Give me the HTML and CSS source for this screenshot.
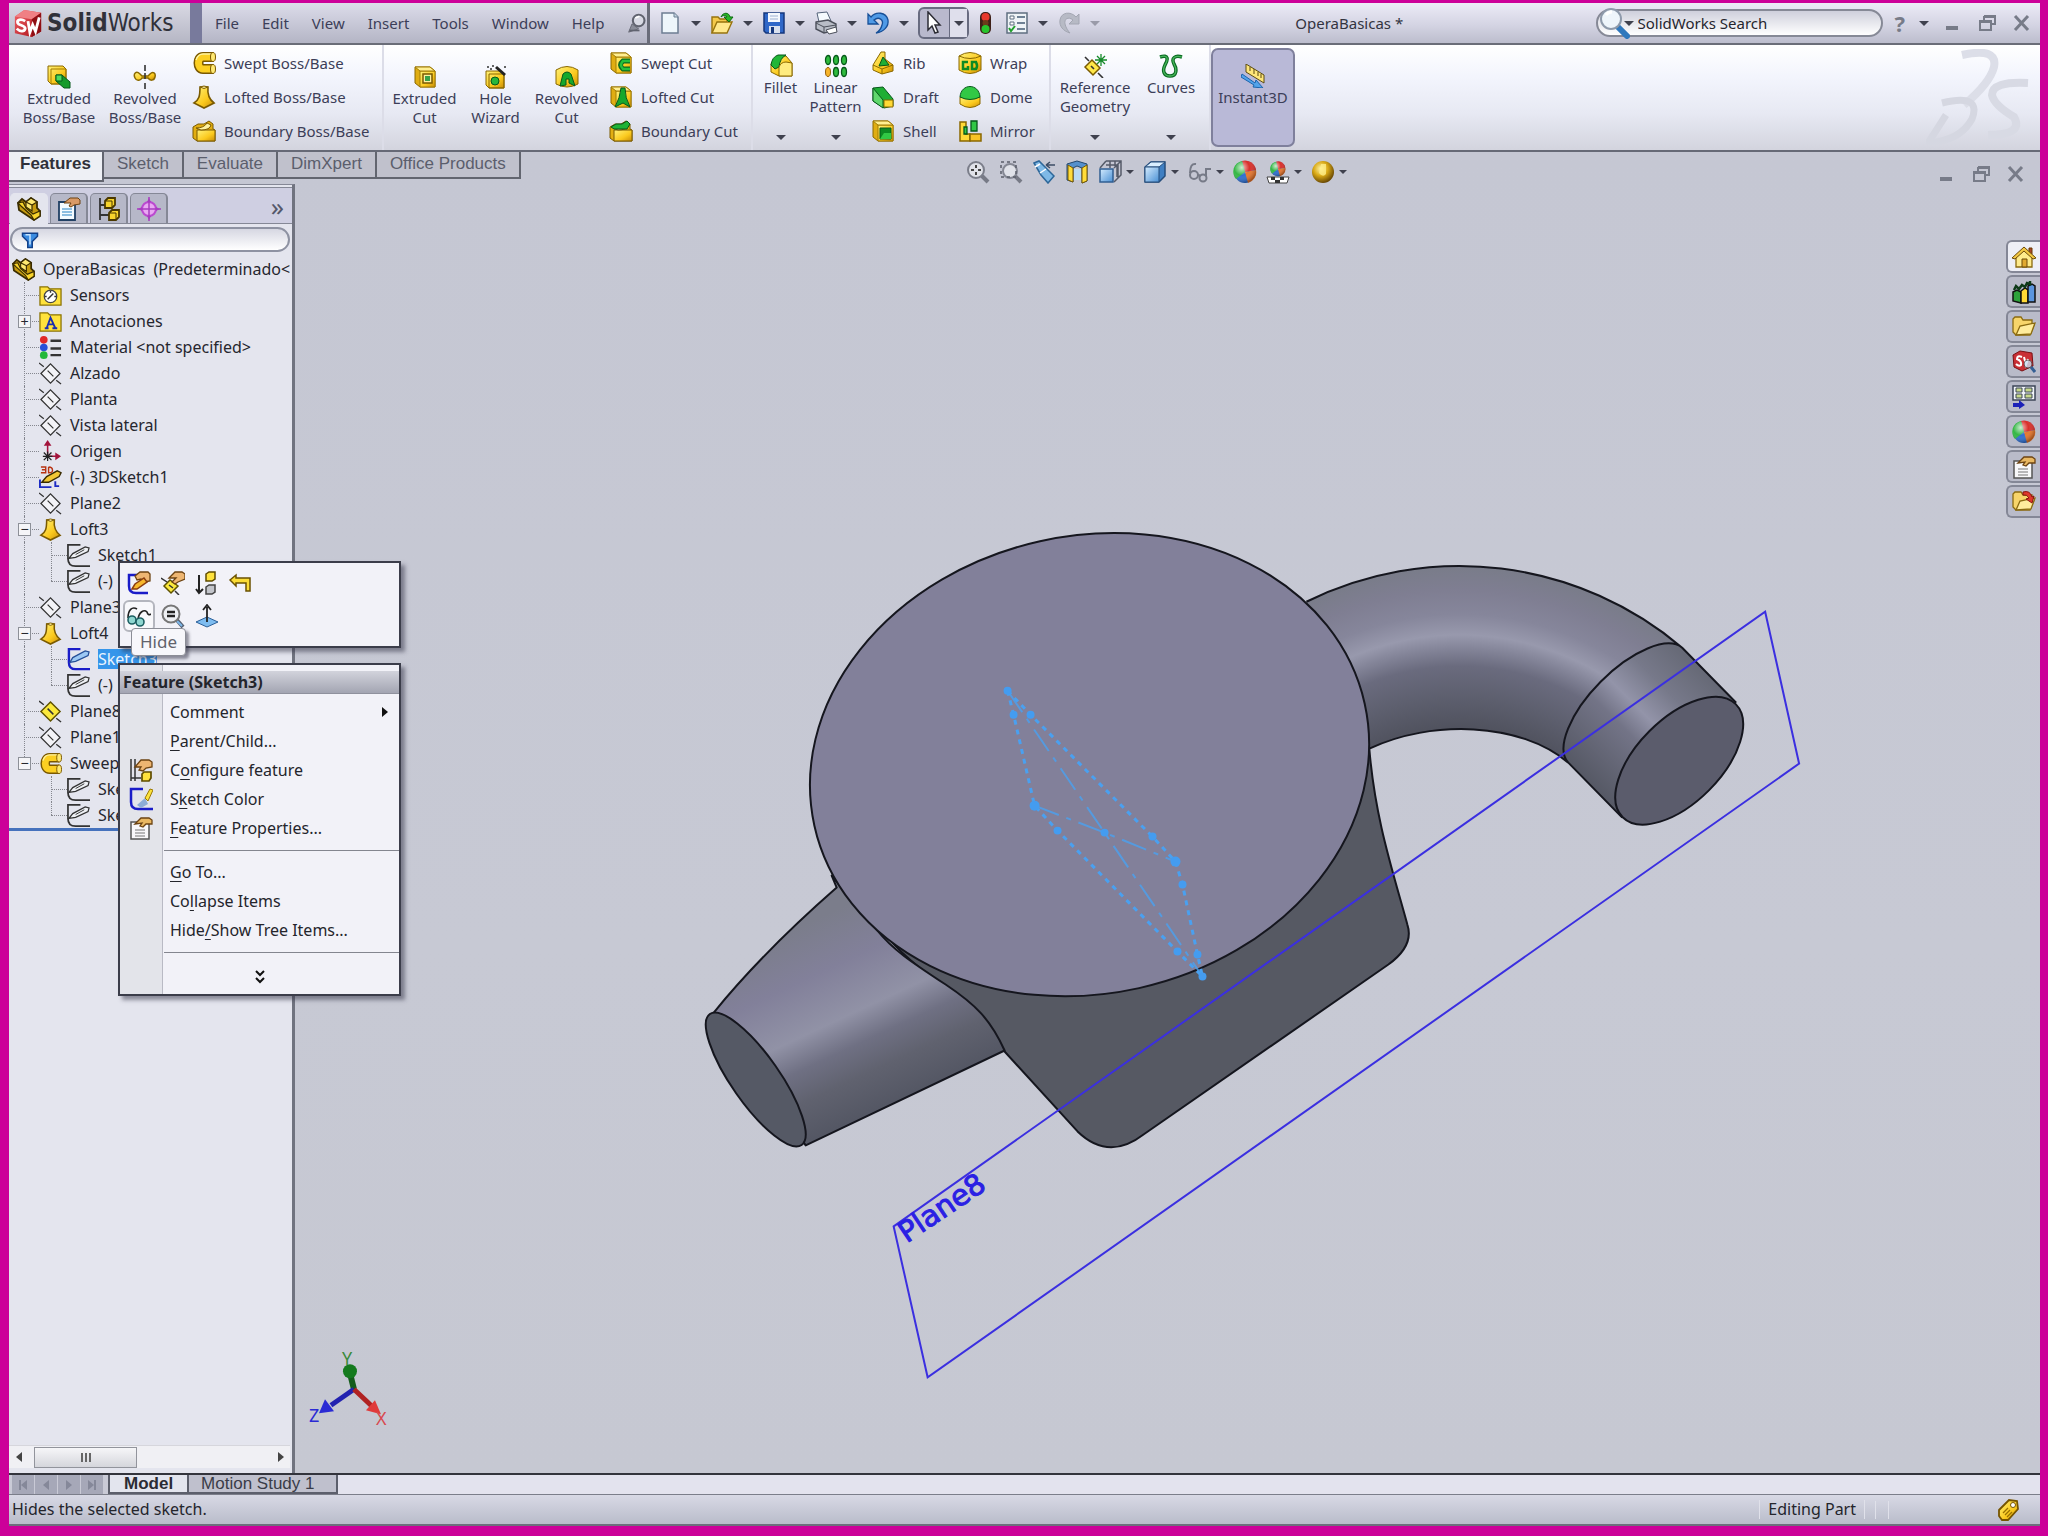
FILE: index.html
```html
<!DOCTYPE html>
<html lang="en">
<head>
<meta charset="utf-8">
<title>SolidWorks - OperaBasicas</title>
<link rel="stylesheet" href="styles.css">
</head>
<body>
<svg class="sprite" aria-hidden="true">
  <defs>
    <linearGradient id="gold" x1="0" y1="0" x2="1" y2="1"><stop offset="0" stop-color="#fff27a"/><stop offset="0.6" stop-color="#fbc91d"/><stop offset="1" stop-color="#c98d08"/></linearGradient>
    <linearGradient id="red" x1="0" y1="0" x2="1" y2="1"><stop offset="0" stop-color="#f4656a"/><stop offset="1" stop-color="#a50e14"/></linearGradient>
    <radialGradient id="shine" cx="0.35" cy="0.3" r="0.7"><stop offset="0" stop-color="#fff" stop-opacity="0.75"/><stop offset="0.5" stop-color="#fff" stop-opacity="0"/><stop offset="1" stop-color="#000" stop-opacity="0.3"/></radialGradient>
    <radialGradient id="goldball" cx="0.4" cy="0.35" r="0.65"><stop offset="0" stop-color="#fff6a8"/><stop offset="0.5" stop-color="#d9a916"/><stop offset="1" stop-color="#6b4a04"/></radialGradient>
    <linearGradient id="bluebox" x1="0" y1="0" x2="1" y2="1"><stop offset="0" stop-color="#d5ecff"/><stop offset="1" stop-color="#4a90d4"/></linearGradient>

    <symbol id="logo" viewBox="0 0 32 32"><path d="M2 9 12 2 30 5V25L20 31 2 27Z" fill="url(#red)"/><path d="M2 9 12 2 30 5 20 12Z" fill="#f08084"/><path d="M20 12 30 5V25L20 31Z" fill="#8f0f14"/><path d="M13 14C8 11 4 13 5 16 6 19 13 18 13 22 12 26 7 25 4 22M16 14 18 26 21 18 24 25 28 10" fill="none" stroke="#fff" stroke-width="3"/></symbol>
    <symbol id="pin" viewBox="0 0 24 24"><circle cx="14" cy="9" r="7" fill="#d8dae4" stroke="#60636f" stroke-width="2.500"/><path d="M10 6 15 4" stroke="#fff" stroke-width="2"/><path d="M6 13 14 19 2 23Z" fill="#8a8d99" stroke="#60636f"/><path d="M3 21H15" stroke="#60636f" stroke-width="2"/></symbol>
    <symbol id="new" viewBox="0 0 24 24"><path d="M4 2H16L20 6V22H4Z" fill="#eef6fb" stroke="#6d7e93" stroke-width="1.5"/><path d="M16 2V6H20" fill="#c4d4e0" stroke="#6d7e93"/></symbol>
    <symbol id="open" viewBox="0 0 24 24"><path d="M2 22V6H8L10 8H17V12" fill="#f4c94a" stroke="#97730e" stroke-width="1.4"/><path d="M2 22 7 11H22L17 22Z" fill="#ffe88b" stroke="#97730e" stroke-width="1.4"/><path d="M11 6C13 1 19 1 20 6H23L19 11 14 6H17C16 4 13 4 11 6Z" fill="#27b527" stroke="#0c6a10"/></symbol>
    <symbol id="save" viewBox="0 0 24 24"><path d="M2 2H22V22H4L2 20Z" fill="#2f67c8" stroke="#16377c" stroke-width="1.5"/><path d="M6 2H18V11H6Z" fill="#f4f7fd"/><path d="M8 5H16M8 8H16" stroke="#9db0d2"/><path d="M7 15H18V22H7Z" fill="#d9e0ee"/><path d="M9 16H12V22H9Z" fill="#16377c"/></symbol>
    <symbol id="print" viewBox="0 0 24 24"><path d="M5 11 3 2 13 1 17 10Z" fill="#f6fbff" stroke="#54637a"/><path d="M2 11 14 9 22 13V19L10 22 2 18Z" fill="#b8bcc6" stroke="#4b4f5a" stroke-width="1.4"/><path d="M2 12 10 16 22 14M10 16V21" stroke="#4b4f5a" fill="none"/><path d="M12 19 22 16 23 21 15 23Z" fill="#fff" stroke="#4b4f5a"/></symbol>
    <symbol id="undo" viewBox="0 0 24 24"><path d="M2 3V13H12L8 9C13 5 18 9 16 14 15 18 12 21 10 22 18 21 23 15 22 9 20 1 10 0 5 6Z" fill="#4f9ae6" stroke="#174f97" stroke-width="1.3"/></symbol>
    <symbol id="redo" viewBox="0 0 24 24"><path d="M22 3V13H12L16 9C11 5 7 8 8 13 9 17 11 20 13 22 6 20 2 15 3 9 4 1 14 0 19 6Z" fill="#b7bac5" stroke="#a3a6b2"/></symbol>
    <symbol id="cursor" viewBox="0 0 24 24"><path d="M7 1V19L11 15 14 22 17 21 14 14H19Z" fill="#fff" stroke="#2c2c34" stroke-width="1.5"/></symbol>
    <symbol id="light" viewBox="0 0 16 24"><rect x="3" y="1" width="11" height="22" rx="5" fill="#3d2018"/><circle cx="8.500" cy="6" r="4" fill="#e8392c"/><circle cx="8.500" cy="12" r="3" fill="#6b3b1a"/><circle cx="8.500" cy="18" r="4" fill="#27c42c"/></symbol>
    <symbol id="options" viewBox="0 0 24 24"><path d="M2 2H22V22H2Z" fill="#eef3f6" stroke="#5f6f80" stroke-width="1.5"/><path d="M5 5H9V8H5ZM5 11H9V14H5Z" fill="#fff" stroke="#5f6f80"/><path d="M12 6H20M12 12H20M12 18H20" stroke="#6e8194" stroke-width="2"/><path d="M4 17 6 20 10 15" stroke="#1fa02a" stroke-width="2" fill="none"/></symbol>
    <symbol id="search" viewBox="0 0 32 32"><path d="M19 19 29 29" stroke="#2f78bd" stroke-width="6" stroke-linecap="round"/><circle cx="13" cy="12" r="10" fill="#eef5fb" stroke="#8e9aab" stroke-width="2"/><path d="M8 8Q10 5 14 5" stroke="#fff" stroke-width="3" fill="none"/></symbol>
    <symbol id="minimize" viewBox="0 0 20 20"><path d="M3 13H15V17H3Z" fill="#777b88"/></symbol>
    <symbol id="restore" viewBox="0 0 20 20"><path d="M7 3H18V11H14M7 3V7M3 8H14V17H3ZM3 9H14M7 4H18" fill="none" stroke="#777b88" stroke-width="2"/></symbol>
    <symbol id="close" viewBox="0 0 20 20"><path d="M4 3 17 17M17 3 4 17" stroke="#777b88" stroke-width="3"/></symbol>

    <symbol id="cube" viewBox="0 0 24 24"><path d="M2 2H17L22 6V22H7L2 18Z" fill="#e0ad12" stroke="#8a6800"/><path d="M7 6H22V22H7Z" fill="url(#gold)" stroke="#a27c04"/><path d="M2 2H17L22 6H7Z" fill="#ffef92" stroke="#a27c04"/></symbol>
    <symbol id="extrude" viewBox="0 0 24 24"><path d="M1 1H16L19 4V19H4L1 16Z" fill="url(#gold)" stroke="#8a6800"/><path d="M4 4H19V19H4Z" fill="none" stroke="#a27c04"/><path d="M9 10H15L23 17V23H17L9 16Z" fill="#149a2a" stroke="#06581a"/><path d="M9 10H15V16H9Z" fill="#4fdc62" stroke="#06581a"/></symbol>
    <symbol id="revolve" viewBox="0 0 24 24"><path d="M7 9C3 5 0 9 2 13 4 17 8 15 9 13H15C17 16 21 16 22 12 23 8 20 6 17 9L15 11H9Z" fill="url(#gold)" stroke="#8a6800" stroke-width="1.500"/><path d="M12 0V6M12 8V14M12 18V24" stroke="#333" stroke-width="1.6"/></symbol>
    <symbol id="sweep" viewBox="0 0 24 24"><path d="M21 6H11C5 6 5 18 11 18H21" fill="none" stroke="#7a5800" stroke-width="10"/><path d="M21 6H11C5 6 5 18 11 18H21" fill="none" stroke="#fccf22" stroke-width="7"/><path d="M19 3H11C7 3 5 6 4 9" fill="none" stroke="#fff4a0" stroke-width="1.5"/><ellipse cx="21" cy="6" rx="2.500" ry="4.500" fill="#ffe972" stroke="#7a5800"/><ellipse cx="21" cy="18" rx="2.500" ry="4.500" fill="#ffe972" stroke="#7a5800"/></symbol>
    <symbol id="loft" viewBox="0 0 24 24"><path d="M8 2H16C15 11 18 15 22 18L12 23 2 18C7 15 8 11 8 2Z" fill="url(#gold)" stroke="#7a5a00" stroke-width="1.6"/><path d="M8 2Q12 5 16 2 12 0 8 2Z" fill="#fff2a0" stroke="#7a5a00"/></symbol>
    <symbol id="boundary" viewBox="0 0 24 24"><path d="M1 8 6 5H12L17 2 21 5V10L23 11V22H5L1 19Z" fill="#e2ae12" stroke="#7a5a00"/><path d="M5 11H23V22H5Z" fill="url(#gold)" stroke="#7a5a00"/><path d="M4 9Q12 9 15 4L19 6Q18 11 9 11Z" fill="#fff3a0" stroke="#7a5a00"/></symbol>
    <symbol id="cutextrude" viewBox="0 0 24 24"><use href="#cube"/><path d="M10 9H19V18H10Z" fill="#fff0a0" stroke="#7a5a00" stroke-width="1.5"/><path d="M12 11H17V16H12Z" fill="#39a24a"/></symbol>
    <symbol id="hole" viewBox="0 0 24 24"><path d="M2 6H17L20 9V23H5L2 20Z" fill="url(#gold)" stroke="#8a6800"/><path d="M5 9H20V23H5Z" fill="none" stroke="#8a6800"/><circle cx="11" cy="16" r="4" fill="#28b73b" stroke="#06581a"/><path d="M12 2 21 10" stroke="#222" stroke-width="3"/><path d="M3 2H5M8 1H10M6 4H8M20 2H22" stroke="#333" stroke-width="1.500"/></symbol>
    <symbol id="cutrevolve" viewBox="0 0 24 24"><path d="M1 5Q12-2 23 5V19Q12 25 1 19Z" fill="url(#gold)" stroke="#8a6800"/><path d="M5 21 8 9Q12 5 16 9L20 21 14 18V14H11V20Z" fill="#16a82c" stroke="#06581a"/></symbol>
    <symbol id="cutsweep" viewBox="0 0 24 24"><use href="#cube"/><path d="M21 10H14Q9 14 14 18H21" fill="none" stroke="#0a6a20" stroke-width="5"/><path d="M21 10H14Q10 14 14 18H21" fill="none" stroke="#24c23b" stroke-width="2.500"/></symbol>
    <symbol id="cutloft" viewBox="0 0 24 24"><use href="#cube"/><path d="M12 3H16Q16 13 21 22L14 18 6 22Q11 13 12 3Z" fill="#16a82c" stroke="#06581a"/></symbol>
    <symbol id="cutboundary" viewBox="0 0 24 24"><use href="#boundary"/><path d="M2 8 7 5H13L18 2 21 5 18 10H5Z" fill="#1fb336" stroke="#06581a"/></symbol>
    <symbol id="fillet" viewBox="0 0 24 24"><path d="M2 10 8 2H17L23 9V22H10L2 18Z" fill="url(#gold)" stroke="#8a6800"/><path d="M2 11Q3 3 9 1H17Q11 4 10 13L6 15Z" fill="#21b637" stroke="#06581a"/><path d="M10 22V13Q12 8 17 8L23 9V22Z" fill="#ffec80" stroke="#8a6800"/></symbol>
    <symbol id="pattern" viewBox="0 0 24 24"><g fill="#2fbb3e" stroke="#07591a" stroke-width="1.300"><ellipse cx="4" cy="6" rx="2.500" ry="4.500"/><ellipse cx="12" cy="6" rx="2.500" ry="4.500"/><ellipse cx="20" cy="6" rx="2.500" ry="4.500"/><ellipse cx="12" cy="18" rx="2.500" ry="4.500"/><ellipse cx="20" cy="18" rx="2.500" ry="4.500"/></g><ellipse cx="4" cy="18" rx="2.500" ry="4.500" fill="#f8b52c" stroke="#96600a"/></symbol>
    <symbol id="rib" viewBox="0 0 24 24"><path d="M2 14 10 1H14V8L22 14V20L11 23 2 19Z" fill="url(#gold)" stroke="#8a6800"/><path d="M12 6 18 14 8 15Z" fill="#1fae34" stroke="#06581a"/><path d="M2 14 11 18 22 14M11 18V23" stroke="#8a6800" fill="none"/></symbol>
    <symbol id="draft" viewBox="0 0 24 24"><path d="M2 3 12 2 22 14V21L13 23 2 16Z" fill="#1fae34" stroke="#06581a"/><path d="M2 3 12 15V23L2 16Z" fill="#5fd76c" stroke="#06581a"/><path d="M13 15H22V22H13Z" fill="#ffd936" stroke="#8a6800"/></symbol>
    <symbol id="shell" viewBox="0 0 24 24"><use href="#cube"/><path d="M9 9H20V20H9Z" fill="#0d8a22" stroke="#06581a"/><path d="M9 20 13 14H20V20Z" fill="#31c845"/></symbol>
    <symbol id="wrap" viewBox="0 0 24 24"><path d="M1 5Q12-2 23 5V19Q12 26 1 19Z" fill="url(#gold)" stroke="#8a6800"/><path d="M1 5Q12 10 23 5" stroke="#8a6800" fill="none"/><path d="M10 11H5V18H10V15M14 11V18H18Q20 15 18 11Z" stroke="#0d8a22" stroke-width="2.500" fill="none"/></symbol>
    <symbol id="dome" viewBox="0 0 24 24"><path d="M2 12H22V19Q12 26 2 19Z" fill="url(#gold)" stroke="#8a6800"/><path d="M2 12C3-2 21-2 22 12Q12 17 2 12Z" fill="#31c845" stroke="#06581a"/></symbol>
    <symbol id="mirror" viewBox="0 0 24 24"><path d="M2 3H8V15H12V22H2Z" fill="#ffd936" stroke="#8a6800" stroke-width="1.500"/><path d="M13 2H19V12H13ZM6 8H9V15H6Z" fill="#31c845" stroke="#06581a" stroke-width="1.300"/><path d="M12 15H23V22H12Z" fill="#f8c324" stroke="#8a6800" stroke-width="1.500"/></symbol>
    <symbol id="refgeo" viewBox="0 0 24 24"><path d="M2 13 9 6 17 14 10 21Z" fill="#ffe748" stroke="#7a5a00" stroke-width="1.500"/><path d="M2 3 6 7M8 12 11 15M15 19 20 24" stroke="#333" stroke-width="1.600"/><path d="M18 0V12M12 6H24M14 2 22 10M22 2 14 10" stroke="#168a2a" stroke-width="1.300"/></symbol>
    <symbol id="curves" viewBox="0 0 24 24"><path d="M1 3C10 0 9 6 6 11 3 17 5 22 11 22 18 22 18 15 15 10 12 4 16 1 23 3" fill="none" stroke="#0b6b22" stroke-width="3.500"/><path d="M1 3C10 0 9 6 6 11 3 17 5 22 11 22 18 22 18 15 15 10 12 4 16 1 23 3" fill="none" stroke="#48b65c" stroke-width="1.300"/></symbol>
    <symbol id="instant" viewBox="0 0 24 24"><path d="M5 0 23 11V19L5 8Z" fill="#ffe679" stroke="#5a4a10"/><path d="M9 3V7M13 5V10M17 8V12M20 10V14" stroke="#5a4a10"/><path d="M1 10 14 19 15 16 22 24 12 23 13 21 0 13Z" fill="#53a3ea" stroke="#1c64ad"/></symbol>

    <symbol id="zoomfit" viewBox="0 0 24 24"><path d="M15 15 22 22" stroke="#777a86" stroke-width="4"/><circle cx="10" cy="10" r="8" fill="#e0e2e9" stroke="#7b7e8a" stroke-width="2"/><path d="M10 5V8M10 12V15M5 10H8M12 10H15" stroke="#444" stroke-width="2"/></symbol>
    <symbol id="zoomarea" viewBox="0 0 24 24"><path d="M15 15 22 22" stroke="#777a86" stroke-width="4"/><circle cx="11" cy="11" r="7" fill="#e0e2e9" stroke="#858894" stroke-width="2"/><path d="M2 2H17V17H2Z" fill="none" stroke="#5b5f6b" stroke-dasharray="3 3" stroke-width="1.500"/></symbol>
    <symbol id="prevview" viewBox="0 0 24 24"><path d="M2 3 7 1 15 9 22 16 16 23 9 15Z" fill="#7fb9e6" stroke="#2d6799" stroke-width="1.500"/><path d="M3 7 8 4M8 13 14 9" stroke="#fff" stroke-width="1.500"/><path d="M14 5H23M14 5 18 2M14 5 18 8" stroke="#3c4d66" stroke-width="1.500"/></symbol>
    <symbol id="section" viewBox="0 0 24 24"><path d="M2 4 12 1 22 4V21L17 23V8L12 6 8 8V22L2 20Z" fill="#5590cc" stroke="#22476e"/><path d="M3 5 8 8V22L3 20ZM17 8 22 5V21L17 23Z" fill="#ffdc3a" stroke="#7a5a00"/><path d="M9 9H16V20H9Z" fill="#b9daf2"/></symbol>
    <symbol id="orient" viewBox="0 0 24 24"><path d="M8 1H23V15L16 22M8 1 2 8M23 1 16 8M8 5H19V17M12 1V8M17 1V6M20 4V19" fill="none" stroke="#555b69" stroke-width="1.500"/><path d="M2 9H15V22H2Z" fill="url(#bluebox)" stroke="#315f92" stroke-width="1.500"/></symbol>
    <symbol id="display" viewBox="0 0 24 24"><path d="M2 7 8 2H22V16L16 22H2Z" fill="#3f7fc2" stroke="#264e7c" stroke-width="1.500"/><path d="M2 7 8 2H22L16 7Z" fill="#d9eeff" stroke="#264e7c"/><path d="M2 7H16V22H2Z" fill="url(#bluebox)" stroke="#264e7c"/></symbol>
    <symbol id="specs" viewBox="0 0 24 24"><g fill="none" stroke="#767a87" stroke-width="2"><path d="M2 13Q2 3 8 4M10 16Q11 14 12 16M18 16V9H23"/><circle cx="6" cy="15" r="4"/><circle cx="15" cy="18" r="3.500"/></g></symbol>
    <symbol id="ball" viewBox="0 0 24 24"><circle cx="12" cy="12" r="11" fill="#2f6fd0"/><path d="M12 12 9 1A11 11 0 0 1 23 10Z" fill="#d92f2a"/><path d="M12 12 9 1A11 11 0 0 0 3 19Z" fill="#34b744"/><path d="M12 12 23 10A11 11 0 0 1 15 23Z" fill="#e8762c"/><circle cx="12" cy="12" r="11" fill="url(#shine)"/></symbol>
    <symbol id="scene" viewBox="0 0 24 24"><path d="M1 17H23L21 23H3Z" fill="#fff" stroke="#444"/><path d="M5 17H9V20H5ZM14 17H18V20H14ZM9 20H14V23H9Z" fill="#333"/><svg x="4" y="1" width="16" height="16" viewBox="0 0 24 24"><use href="#ball"/></svg></symbol>
    <symbol id="goldsphere" viewBox="0 0 24 24"><circle cx="12" cy="12" r="11" fill="url(#goldball)"/><path d="M10 4H15V14Q12 18 8 13Z" fill="#ffef8a" opacity="0.800"/></symbol>

    <symbol id="part" viewBox="0 0 24 24"><path d="M1 6 5 2 9 5 14 1 20 5V11L23 14V19L17 23 2 13Z" fill="#c79c10" stroke="#3b2d00" stroke-width="1.800"/><path d="M1 6 4 9 14 18 17 23 23 19V14L16 17 9 11 6 5Z" fill="#f7d32c" stroke="#3b2d00" stroke-width="1.200"/><path d="M9 5 14 1 20 5 15 8ZM9 5V10L15 14V8" fill="#ffe970" stroke="#3b2d00" stroke-width="1.200"/></symbol>
    <symbol id="hand" viewBox="0 0 24 24"><path d="M4 7 11 1H20L23 4V9L15 10 12 13 9 12 13 8 8 9Z" fill="#eeb672" stroke="#6c4312" stroke-width="1.300"/></symbol>
    <symbol id="props" viewBox="0 0 24 24"><path d="M2 5H18V23H2Z" fill="#f4fbff" stroke="#214064" stroke-width="1.800"/><path d="M5 12H15M5 15H15M5 18H15" stroke="#69abd8" stroke-width="1.500"/><path d="M7 6 13 1H21L23 3V7L17 8 14 10 12 9 14 6Z" fill="#d99a66" stroke="#6c4312"/></symbol>
    <symbol id="config" viewBox="0 0 24 24"><path d="M3 1V23M3 8H10M3 18H13" stroke="#333" stroke-width="1.800"/><path d="M8 4 11 1H18V8L15 11H8ZM12 16 15 13H22V20L19 23H12Z" fill="#f7d32c" stroke="#4a3800" stroke-width="1.800"/><path d="M8 4H15V11M12 16H19V23" fill="none" stroke="#4a3800"/></symbol>
    <symbol id="target" viewBox="0 0 24 24"><circle cx="12" cy="12" r="7" fill="#e9a8f2" stroke="#bb4ad0" stroke-width="2"/><path d="M12 0V24M0 12H24" stroke="#a83cc0" stroke-width="1.500"/><path d="M12 1 14 5H10ZM12 23 14 19H10ZM1 12 5 10V14ZM23 12 19 10V14Z" fill="#a83cc0"/></symbol>
    <symbol id="funnel" viewBox="0 0 24 24"><path d="M2 3H22V7L15 14V22H9V14L2 7Z" fill="#3a8be0" stroke="#12418a" stroke-width="2"/><path d="M6 5H12V18" stroke="#c5e4ff" stroke-width="2" fill="none"/></symbol>
    <symbol id="folder" viewBox="0 0 24 24"><path d="M1 3H9L11 5H23V22H1Z" fill="#ffe23c" stroke="#8a7200" stroke-width="1.300"/></symbol>
    <symbol id="sensor" viewBox="0 0 24 24"><use href="#folder"/><circle cx="12" cy="13" r="6.500" fill="#fff" stroke="#444" stroke-width="1.300"/><path d="M9 16 15 10M12 7V9M6 13H8M16 13H18" stroke="#333" stroke-width="1.500"/></symbol>
    <symbol id="annot" viewBox="0 0 24 24"><use href="#folder"/><path d="M6 19H10M14 19H19M8 19 12 8 17 19M10 15H15" stroke="#1c2fae" stroke-width="2" fill="none"/></symbol>
    <symbol id="material" viewBox="0 0 24 24"><circle cx="5" cy="4" r="4" fill="#e02828"/><circle cx="5" cy="12" r="4" fill="#2850d8"/><circle cx="5" cy="20" r="4" fill="#22b83a"/><path d="M12 5H23M12 13H23M12 20H23" stroke="#333" stroke-width="2.500"/></symbol>
    <symbol id="plane" viewBox="0 0 24 24"><path d="M2 12 12 2 22 12 12 22Z" fill="#f3f3f7" stroke="#333" stroke-width="1.300"/><path d="M0 1 5 5M9 9 15 15M18 19 23 23" stroke="#333" stroke-width="1.300"/></symbol>
    <symbol id="planesel" viewBox="0 0 24 24"><path d="M2 12 12 2 22 12 12 22Z" fill="#fbe93c" stroke="#5f5200" stroke-width="1.500"/><path d="M0 1 5 5M9 9 15 15M18 19 23 23" stroke="#333" stroke-width="1.500"/></symbol>
    <symbol id="origin" viewBox="0 0 24 24"><path d="M9 2V17H21" stroke="#a3143c" stroke-width="1.600" fill="none"/><path d="M9 0 13 6H5ZM23 17 17 13V21Z" fill="#a3143c"/><path d="M5 13 13 21M13 13 5 21M4 17H14M9 12V22" stroke="#222" stroke-width="1.300"/></symbol>
    <symbol id="sketch3d" viewBox="0 0 24 24"><path d="M2 1H7V7H2M3 4H7M10 1V7Q15 7 14 4 14 1 10 1" fill="none" stroke="#b83312" stroke-width="1.500"/><path d="M1 14V22H13M17 16V21H21" stroke="#1d2cc4" stroke-width="2" fill="none"/><path d="M3 17 8 11 19 5 23 7 21 11 10 17Z" fill="#f2c835" stroke="#3a2c00" stroke-width="1.500"/></symbol>
    <symbol id="sketch" viewBox="0 0 24 24"><path d="M14 1H1V15Q1 23 9 23H24" fill="none" stroke="#333" stroke-width="1.800"/><path d="M2 15 6 10 19 3 23 4 22 8 9 14Z" fill="#eef0f4" stroke="#333" stroke-width="1.300"/><path d="M9 11 18 6" stroke="#333"/></symbol>
    <symbol id="sketchsel" viewBox="0 0 24 24"><path d="M14 1H2V15Q2 22 9 22H24" fill="none" stroke="#1a1cc8" stroke-width="2.500"/><path d="M3 15 6 10 19 3 23 4 22 8 9 14Z" fill="#9cc8f4" stroke="#264f98" stroke-width="1.300"/></symbol>

    <symbol id="editsketch" viewBox="0 0 24 24"><path d="M12 4H2V15Q2 22 9 22H21" fill="none" stroke="#1a1cc8" stroke-width="2.500"/><path d="M8 5 13 1H21L23 3V10L17 11 14 8 10 9Z" fill="#eeb672" stroke="#6c4312" stroke-width="1.300"/><path d="M5 18 8 13 17 7 20 11 10 18Z" fill="#f7b72c" stroke="#8b3d10" stroke-width="1.500"/></symbol>
    <symbol id="editplane" viewBox="0 0 24 24"><path d="M3 15 9 9 17 15 10 22Z" fill="#fbe93c" stroke="#5f5200" stroke-width="1.500"/><path d="M0 7 6 11M14 20 18 24M8 14 12 17" stroke="#333" stroke-width="1.500"/><path d="M8 7 14 1H21L24 3V8L17 11 14 13 11 11 15 7Z" fill="#eeb672" stroke="#6c4312" stroke-width="1.300"/></symbol>
    <symbol id="suppress" viewBox="0 0 24 24"><path d="M4 4V22M1 18 4 22 8 18" fill="none" stroke="#222" stroke-width="2"/><path d="M11 3 14 1H20V8L17 10H11Z" fill="#ffe23c" stroke="#5f4c00" stroke-width="1.500"/><path d="M11 16 14 14H20V21L17 23H11Z" fill="#c3c5cb" stroke="#444" stroke-width="1.500"/></symbol>
    <symbol id="rollback" viewBox="0 0 24 24"><path d="M1 9 7 4V7H21V20H17V12H7V15Z" fill="#fbdc35" stroke="#6b5200" stroke-width="1.500"/></symbol>
    <symbol id="glasses" viewBox="0 0 24 24"><path d="M1 14C1 6 5 2 10 5M11 15C12 8 17 5 20 8Q21 12 24 10" fill="none" stroke="#222" stroke-width="1.600"/><circle cx="5" cy="16" r="4" fill="#8fd6d0" stroke="#1c5f62" stroke-width="1.600"/><circle cx="13" cy="18" r="4" fill="#8fd6d0" stroke="#1c5f62" stroke-width="1.600"/></symbol>
    <symbol id="zoomsel" viewBox="0 0 24 24"><path d="M15 15 22 23" stroke="#555f70" stroke-width="4"/><path d="M16 17 21 22" stroke="#7db8ea" stroke-width="2"/><circle cx="10" cy="10" r="8.500" fill="#eef0f4" stroke="#777" stroke-width="2"/><path d="M6 8H14M6 12H14" stroke="#222" stroke-width="2.500"/></symbol>
    <symbol id="normal" viewBox="0 0 24 24"><path d="M1 18 12 13 23 18 12 23Z" fill="#7dbcf0" stroke="#2a5f98"/><path d="M12 18V3M8 6 12 1 16 6" stroke="#222" stroke-width="1.800" fill="none"/></symbol>
    <symbol id="configure" viewBox="0 0 24 24"><path d="M2 1V23M6 1V23M2 20H12" stroke="#333" stroke-width="1.500"/><path d="M6 9 12 2H20L23 4V9L17 10 14 13 10 12 12 9Z" fill="#eeb672" stroke="#6c4312" stroke-width="1.300"/><path d="M13 16 15 14H22V20L20 23H13Z" fill="#ffe23c" stroke="#5f4c00" stroke-width="1.700"/></symbol>
    <symbol id="color" viewBox="0 0 24 24"><path d="M14 2H2V15Q2 22 9 22H24" fill="none" stroke="#1a1cc8" stroke-width="2.500"/><path d="M8 18 16 11 19 17 12 21Z" fill="#8dacd6"/><path d="M16 11 21 2 24 3 19 14Z" fill="#fbe23c" stroke="#9b7800"/></symbol>
    <symbol id="featprops" viewBox="0 0 24 24"><path d="M2 6H20V23H2Z" fill="#f8f8fa" stroke="#555" stroke-width="1.500"/><path d="M6 14H16M6 17H16M6 20H16" stroke="#777"/><path d="M6 8 12 2H20L23 4V8L17 8 14 11 11 10 13 7Z" fill="#e9b862" stroke="#6c4312" stroke-width="1.300"/></symbol>

    <symbol id="home" viewBox="0 0 24 24"><path d="M17 3H20V9H17Z" fill="#a8442a" stroke="#6a3a00"/><path d="M4 11V22H20V11L12 4Z" fill="#ffeb8c" stroke="#8a6a10" stroke-width="1.300"/><path d="M0 13 12 2 24 13 21 14 12 6 3 14Z" fill="#f3c843" stroke="#6b4a08"/><path d="M10 14H15V22H10Z" fill="#e0a92f" stroke="#6b4a08"/></symbol>
    <symbol id="library" viewBox="0 0 24 24"><path d="M1 12 5 10 9 12V23L1 21Z" fill="#2da23a" stroke="#111" stroke-width="1.500"/><path d="M9 11 13 8 16 10V23H9Z" fill="#ffd936" stroke="#111" stroke-width="1.500"/><path d="M16 6 20 4 23 6V22H16Z" fill="#5b95de" stroke="#111" stroke-width="1.500"/><path d="M2 10 4 6 7 9 10 5 13 7 15 3 18 4V1" fill="none" stroke="#0e3a18" stroke-width="2.500"/></symbol>
    <symbol id="folderopen" viewBox="0 0 24 24"><path d="M1 4 3 2H9L11 5H20V9L22 10 18 20H4L1 17Z" fill="#f7d56a" stroke="#8a6a10" stroke-width="1.300"/><path d="M4 20 8 11 23 8 19 19Z" fill="#ffec9c" stroke="#8a6a10" stroke-width="1.300"/></symbol>
    <symbol id="swglobe" viewBox="0 0 24 24"><path d="M1 5 8 1 20 3 21 16 10 21 2 17Z" fill="#c92f35" stroke="#7a1014"/><path d="M10 7Q5 5 5 9 10 11 9 15 7 17 4 14M12 7 14 15 16 9" stroke="#fff" stroke-width="2" fill="none"/><circle cx="16" cy="14" r="4" fill="#c9def2" opacity="0.800" stroke="#555"/><path d="M19 17 23 22" stroke="#345f94" stroke-width="3"/></symbol>
    <symbol id="palette" viewBox="0 0 24 24"><path d="M1 1H23V15H1Z" fill="#f1f4f8" stroke="#3c4657" stroke-width="1.500"/><path d="M4 3H10V7H4ZM4 9H10V13H4ZM13 3H20V7H13ZM13 9H20V13H13Z" fill="#c7d98a" stroke="#3c4657"/><path d="M1 18H7V15L13 20 7 24V22H1Z" fill="#1c22b8"/></symbol>
    <symbol id="folderred" viewBox="0 0 24 24"><use href="#folderopen"/><path d="M11 2Q18 0 20 7L22 6 20 13 14 9 17 8Q15 4 11 5Z" fill="#e0382c" stroke="#8a140e"/></symbol>
    <symbol id="tag" viewBox="0 0 24 24"><path d="M3 12 13 2 21 3 22 11 12 22 6 22 3 18Z" fill="url(#gold)" stroke="#765400" stroke-width="1.800"/><circle cx="17" cy="7" r="2.500" fill="#fff" stroke="#765400"/><path d="M7 15 12 10M9 17 14 12M11 19 16 14" stroke="#9b7200" stroke-width="1.300"/></symbol>
  </defs>
</svg>

<div class="app">
  <header class="titlebar">
    <div class="brand"><svg class="brand-mark"><use href="#logo"/></svg><span><b>Solid</b>Works</span></div>
    <nav class="menubar">
      <button>File</button><button>Edit</button><button>View</button><button>Insert</button><button>Tools</button><button>Window</button><button>Help</button>
      <button aria-label="Pin menu"><svg class="icon pin"><use href="#pin"/></svg></button>
    </nav>
    <div class="quick">
      <button class="split" aria-label="New"><svg class="icon"><use href="#new"/></svg><i class="caret"></i></button>
      <button class="split" aria-label="Open"><svg class="icon"><use href="#open"/></svg><i class="caret"></i></button>
      <button class="split" aria-label="Save"><svg class="icon"><use href="#save"/></svg><i class="caret"></i></button>
      <button class="split" aria-label="Print"><svg class="icon"><use href="#print"/></svg><i class="caret"></i></button>
      <button class="split" aria-label="Undo"><svg class="icon"><use href="#undo"/></svg><i class="caret"></i></button>
      <button class="select-tool" aria-label="Select"><svg class="icon"><use href="#cursor"/></svg><span class="drop"><i class="caret"></i></span></button>
      <button class="rebuild" aria-label="Rebuild"><svg class="icon narrow"><use href="#light"/></svg></button>
      <button class="split" aria-label="Options"><svg class="icon"><use href="#options"/></svg><i class="caret"></i></button>
      <button class="split faded" aria-label="Redo"><svg class="icon"><use href="#redo"/></svg><i class="caret"></i></button>
    </div>
    <h1 class="doc-title">OperaBasicas *</h1>
    <label class="search"><svg class="lens"><use href="#search"/></svg><i class="caret"></i><input type="text" value="SolidWorks Search" aria-label="SolidWorks Search"></label>
    <div class="window-controls">
      <button class="help" aria-label="Help options">?</button><i class="caret"></i>
      <button aria-label="Minimize"><svg class="ctl"><use href="#minimize"/></svg></button>
      <button aria-label="Restore"><svg class="ctl"><use href="#restore"/></svg></button>
      <button aria-label="Close"><svg class="ctl"><use href="#close"/></svg></button>
    </div>
  </header>

  <section class="ribbon">
    <div class="group boss">
      <button class="big low"><svg class="icon"><use href="#extrude"/></svg>Extruded<br>Boss/Base</button>
      <button class="big low"><svg class="icon"><use href="#revolve"/></svg>Revolved<br>Boss/Base</button>
      <div class="stack">
        <button><svg class="icon"><use href="#sweep"/></svg>Swept Boss/Base</button>
        <button><svg class="icon"><use href="#loft"/></svg>Lofted Boss/Base</button>
        <button><svg class="icon"><use href="#boundary"/></svg>Boundary Boss/Base</button>
      </div>
    </div>
    <div class="group cut">
      <button class="big low"><svg class="icon"><use href="#cutextrude"/></svg>Extruded<br>Cut</button>
      <button class="big low"><svg class="icon"><use href="#hole"/></svg>Hole<br>Wizard</button>
      <button class="big low"><svg class="icon"><use href="#cutrevolve"/></svg>Revolved<br>Cut</button>
      <div class="stack">
        <button><svg class="icon"><use href="#cutsweep"/></svg>Swept Cut</button>
        <button><svg class="icon"><use href="#cutloft"/></svg>Lofted Cut</button>
        <button><svg class="icon"><use href="#cutboundary"/></svg>Boundary Cut</button>
      </div>
    </div>
    <div class="group detail">
      <button class="big"><svg class="icon"><use href="#fillet"/></svg>Fillet<i class="caret"></i></button>
      <button class="big"><svg class="icon"><use href="#pattern"/></svg>Linear<br>Pattern<i class="caret"></i></button>
      <div class="stack">
        <button><svg class="icon"><use href="#rib"/></svg>Rib</button>
        <button><svg class="icon"><use href="#draft"/></svg>Draft</button>
        <button><svg class="icon"><use href="#shell"/></svg>Shell</button>
      </div>
      <div class="stack">
        <button><svg class="icon"><use href="#wrap"/></svg>Wrap</button>
        <button><svg class="icon"><use href="#dome"/></svg>Dome</button>
        <button><svg class="icon"><use href="#mirror"/></svg>Mirror</button>
      </div>
    </div>
    <div class="group reference">
      <button class="big"><svg class="icon"><use href="#refgeo"/></svg>Reference<br>Geometry<i class="caret"></i></button>
      <button class="big"><svg class="icon"><use href="#curves"/></svg>Curves<i class="caret"></i></button>
    </div>
    <button class="big low instant"><svg class="icon"><use href="#instant"/></svg>Instant3D</button>
    <svg class="ds" viewBox="0 0 104 96" aria-hidden="true"><path d="M36 6Q72-2 68 18 64 34 38 56" fill="none" stroke="#dcdee8" stroke-width="8"/><path d="M16 54Q56 44 46 70 34 92 2 94L20 66" fill="none" stroke="#d5d7e1" stroke-width="7"/><path d="M102 34Q66 32 66 46 68 56 88 68 98 86 62 86" fill="none" stroke="#d8dae4" stroke-width="8"/></svg>
  </section>

  <main class="workspace">
    <div class="strip">
      <div class="tabs" role="tablist">
        <button role="tab" aria-selected="true" class="active">Features</button><button role="tab">Sketch</button><button role="tab">Evaluate</button><button role="tab">DimXpert</button><button role="tab">Office Products</button>
      </div>
      <div class="headsup">
        <button aria-label="Zoom to fit"><svg class="icon"><use href="#zoomfit"/></svg></button>
        <button aria-label="Zoom to area"><svg class="icon"><use href="#zoomarea"/></svg></button>
        <button aria-label="Previous view"><svg class="icon"><use href="#prevview"/></svg></button>
        <button aria-label="Section view"><svg class="icon"><use href="#section"/></svg></button>
        <button aria-label="View orientation"><svg class="icon"><use href="#orient"/></svg><i class="caret"></i></button>
        <button aria-label="Display style"><svg class="icon"><use href="#display"/></svg><i class="caret"></i></button>
        <button aria-label="Hide or show items"><svg class="icon"><use href="#specs"/></svg><i class="caret"></i></button>
        <button aria-label="Edit appearance"><svg class="icon"><use href="#ball"/></svg></button>
        <button aria-label="Apply scene"><svg class="icon"><use href="#scene"/></svg><i class="caret"></i></button>
        <button aria-label="View settings"><svg class="icon"><use href="#goldsphere"/></svg><i class="caret"></i></button>
      </div>
      <div class="doc-controls">
        <button aria-label="Minimize document"><svg class="ctl"><use href="#minimize"/></svg></button>
        <button aria-label="Restore document"><svg class="ctl"><use href="#restore"/></svg></button>
        <button aria-label="Close document"><svg class="ctl"><use href="#close"/></svg></button>
      </div>
    </div>

    <aside class="manager">
      <div class="manager-tabs">
        <button class="active" aria-label="Feature tree"><svg class="icon"><use href="#part"/></svg></button>
        <button aria-label="Properties"><svg class="icon"><use href="#props"/></svg></button>
        <button aria-label="Configurations"><svg class="icon"><use href="#config"/></svg></button>
        <button aria-label="DimXpert"><svg class="icon"><use href="#target"/></svg></button>
        <button class="more" aria-label="More">»</button>
      </div>
      <label class="filter"><svg><use href="#funnel"/></svg><input type="text" aria-label="Filter"></label>
      <ul class="tree">
        <li class="root"><svg class="icon"><use href="#part"/></svg>OperaBasicas&nbsp; (Predeterminado&lt;</li>
        <li><i class="branch"></i><svg class="icon"><use href="#sensor"/></svg>Sensors</li>
        <li><i class="branch"><b class="box">+</b></i><svg class="icon"><use href="#annot"/></svg>Anotaciones</li>
        <li><i class="branch"></i><svg class="icon"><use href="#material"/></svg>Material &lt;not specified&gt;</li>
        <li><i class="branch"></i><svg class="icon"><use href="#plane"/></svg>Alzado</li>
        <li><i class="branch"></i><svg class="icon"><use href="#plane"/></svg>Planta</li>
        <li><i class="branch"></i><svg class="icon"><use href="#plane"/></svg>Vista lateral</li>
        <li><i class="branch"></i><svg class="icon"><use href="#origin"/></svg>Origen</li>
        <li><i class="branch"></i><svg class="icon"><use href="#sketch3d"/></svg>(-) 3DSketch1</li>
        <li><i class="branch"></i><svg class="icon"><use href="#plane"/></svg>Plane2</li>
        <li><i class="branch"><b class="box">−</b></i><svg class="icon"><use href="#loft"/></svg>Loft3</li>
        <li><i class="pass"></i><i class="branch sub"></i><svg class="icon"><use href="#sketch"/></svg>Sketch1</li>
        <li><i class="pass"></i><i class="branch sub last"></i><svg class="icon"><use href="#sketch"/></svg>(-)</li>
        <li><i class="branch"></i><svg class="icon"><use href="#plane"/></svg>Plane3</li>
        <li><i class="branch"><b class="box">−</b></i><svg class="icon"><use href="#loft"/></svg>Loft4</li>
        <li><i class="pass"></i><i class="branch sub"></i><svg class="icon"><use href="#sketchsel"/></svg><span class="selected">Sketch3</span></li>
        <li><i class="pass"></i><i class="branch sub last"></i><svg class="icon"><use href="#sketch"/></svg>(-)</li>
        <li><i class="branch"></i><svg class="icon"><use href="#planesel"/></svg>Plane8</li>
        <li><i class="branch"></i><svg class="icon"><use href="#plane"/></svg>Plane1</li>
        <li><i class="branch last"><b class="box">−</b></i><svg class="icon"><use href="#sweep"/></svg>Sweep</li>
        <li><i class="pass none"></i><i class="branch sub"></i><svg class="icon"><use href="#sketch"/></svg>Sketch</li>
        <li><i class="pass none"></i><i class="branch sub last"></i><svg class="icon"><use href="#sketch"/></svg>Sketch</li>
      </ul>
      <div class="scrollbar"><i class="tri left"></i><span class="thumb"><i></i><i></i><i></i></span><i class="tri right"></i></div>
    </aside>

    <section class="viewport">
      <svg class="drawing" viewBox="294 184 1746 1290" preserveAspectRatio="xMidYMid meet">
        <defs>
          <radialGradient id="bend" gradientUnits="userSpaceOnUse" cx="1459" cy="912" r="346">
            <stop offset="0.530" stop-color="#50525e"/><stop offset="0.620" stop-color="#5d5f6e"/><stop offset="0.710" stop-color="#6a6b7e"/><stop offset="0.760" stop-color="#838498"/><stop offset="0.800" stop-color="#9899ad"/><stop offset="0.860" stop-color="#86869b"/><stop offset="0.930" stop-color="#7f7e92"/><stop offset="1" stop-color="#797c89"/>
          </radialGradient>
          <linearGradient id="stub" gradientUnits="userSpaceOnUse" x1="1706" y1="674" x2="1592" y2="788">
            <stop offset="0" stop-color="#666976"/><stop offset="0.250" stop-color="#77798a"/><stop offset="0.450" stop-color="#9394a9"/><stop offset="0.600" stop-color="#737487"/><stop offset="1" stop-color="#555864"/>
          </linearGradient>
          <linearGradient id="cone" gradientUnits="userSpaceOnUse" x1="786" y1="933" x2="871" y2="1116">
            <stop offset="0" stop-color="#7b7d8b"/><stop offset="0.250" stop-color="#82809a"/><stop offset="0.500" stop-color="#9192a6"/><stop offset="0.650" stop-color="#6f7083"/><stop offset="0.800" stop-color="#60626f"/><stop offset="1" stop-color="#535663"/>
          </linearGradient>
        </defs>
        <g stroke="#15161e" stroke-width="2" stroke-linejoin="round">
          <path d="M1306 602A345 345 0 0 1 1682 648L1690 770 1568 763C1520 722 1430 720 1369 749Z" fill="url(#bend)" stroke="none"/>
          <path d="M1682 648A81 35 -45 0 0 1568 763L1622 818 1736 703Z" fill="url(#stub)" stroke="none"/>
          <path d="M1306 602A345 345 0 0 1 1682 648L1736 703M1369 749C1430 720 1520 722 1568 763L1622 818M1682 648A81 35 -45 0 0 1568 763" fill="none"/>
          <ellipse cx="1679" cy="761" rx="80" ry="42" transform="rotate(-45 1679 761)" fill="#5b5c6c"/>
          <path d="M880 930C925 985 975 995 1004 1052L1077 1132Q1108 1162 1143 1135L1388 965Q1414 946 1407 925C1392 870 1375 820 1369 750L1100 765Z" fill="#565963"/>
          <path d="M831 876 836 888C788 930 748 970 713 1013L805 1146 1004 1051C990 1020 975 1005 945 985 910 962 892 950 876 930Z" fill="url(#cone)"/>
          <ellipse cx="755" cy="1080" rx="80" ry="24" transform="rotate(55 755 1080)" fill="#555965"/>
          <ellipse cx="1089" cy="765" rx="282" ry="229" transform="rotate(-12.500 1089 765)" fill="#82809a"/>
        </g>
        <path class="plane-line" d="M893 1227 1765 612 1799 764 927 1378Z"/>
        <text class="plane-label" x="906" y="1244" transform="rotate(-34 906 1244)">Plane8</text>
        <g class="sketch-lines">
          <path class="dots" d="M1007 691 1013 715 1034 806 1057 831 1177 952 1202 977M1007 691 1030 715 1152 837 1175 862 1182 885 1197 955 1202 977"/>
          <path class="dashes" d="M1007 691 1104 833 1202 977M1034 806 1104 833 1175 862"/>
        </g>
        <g fill="#449cf0"><circle cx="1007" cy="691" r="4"/><circle cx="1013" cy="715" r="4"/><circle cx="1030" cy="715" r="4"/><circle cx="1034" cy="806" r="5"/><circle cx="1057" cy="831" r="4"/><circle cx="1104" cy="833" r="4"/><circle cx="1152" cy="837" r="4"/><circle cx="1175" cy="862" r="5"/><circle cx="1182" cy="885" r="4"/><circle cx="1197" cy="955" r="4"/><circle cx="1177" cy="952" r="4"/><circle cx="1202" cy="977" r="4"/></g>
        <g class="triad">
          <path d="M353 1390 349 1374" stroke="#155c1c" stroke-width="6"/><circle cx="349" cy="1372" r="7" fill="#147a1e"/>
          <path d="M353 1390 330 1406" stroke="#2222b0" stroke-width="5"/><path d="M318 1414 324 1400 333 1412Z" fill="#2a2ad4"/>
          <path d="M353 1390 371 1407" stroke="#b02222" stroke-width="5"/><path d="M380 1415 365 1411 374 1401Z" fill="#e03a3a"/>
          <text x="341" y="1366" fill="#3a8a3a">Y</text><text x="308" y="1423" fill="#2a2ad4">Z</text><text x="375" y="1426" fill="#d84a50">X</text>
        </g>
      </svg>
      <nav class="taskpane">
        <button class="active" aria-label="Resources"><svg class="icon"><use href="#home"/></svg></button>
        <button aria-label="Design library"><svg class="icon"><use href="#library"/></svg></button>
        <button aria-label="File explorer"><svg class="icon"><use href="#folderopen"/></svg></button>
        <button aria-label="Search"><svg class="icon"><use href="#swglobe"/></svg></button>
        <button aria-label="View palette"><svg class="icon"><use href="#palette"/></svg></button>
        <button aria-label="Appearances"><svg class="icon"><use href="#ball"/></svg></button>
        <button aria-label="Custom properties"><svg class="icon"><use href="#featprops"/></svg></button>
        <button aria-label="Recovery"><svg class="icon"><use href="#folderred"/></svg></button>
      </nav>
    </section>
  </main>

  <div class="sheets">
    <div class="sheet-nav">
      <button aria-label="First"><i class="bar"></i><i class="tri left"></i></button><button aria-label="Previous"><i class="tri left"></i></button><button aria-label="Next"><i class="tri right"></i></button><button aria-label="Last"><i class="tri right"></i><i class="bar"></i></button>
    </div>
    <button class="sheet active">Model</button><button class="sheet">Motion Study 1</button>
  </div>
  <footer class="status"><span class="hint">Hides the selected sketch.</span><span class="mode">Editing Part</span><span class="cells"></span><svg class="icon"><use href="#tag"/></svg></footer>

  <div class="popup context-bar">
    <button aria-label="Edit sketch"><svg class="icon"><use href="#editsketch"/></svg></button>
    <button aria-label="Edit sketch plane"><svg class="icon"><use href="#editplane"/></svg></button>
    <button aria-label="Suppress"><svg class="icon"><use href="#suppress"/></svg></button>
    <button aria-label="Rollback"><svg class="icon"><use href="#rollback"/></svg></button>
    <button class="hover" aria-label="Hide"><svg class="icon"><use href="#glasses"/></svg></button>
    <button aria-label="Zoom to selection"><svg class="icon"><use href="#zoomsel"/></svg></button>
    <button aria-label="Normal to"><svg class="icon"><use href="#normal"/></svg></button>
  </div>
  <div class="tooltip" role="tooltip">Hide</div>
  <div class="popup context-menu" role="menu">
    <h2>Feature (Sketch3)</h2>
    <button role="menuitem"><span></span>Comment<i class="tri right"></i></button>
    <button role="menuitem"><span></span><u>P</u>arent/Child...</button>
    <button role="menuitem"><span><svg class="icon"><use href="#configure"/></svg></span>C<u>o</u>nfigure feature</button>
    <button role="menuitem"><span><svg class="icon"><use href="#color"/></svg></span>S<u>k</u>etch Color</button>
    <button role="menuitem"><span><svg class="icon"><use href="#featprops"/></svg></span><u>F</u>eature Properties...</button>
    <hr>
    <button role="menuitem"><span></span><u>G</u>o To...</button>
    <button role="menuitem"><span></span>Co<u>l</u>lapse Items</button>
    <button role="menuitem"><span></span>Hide<u>/</u>Show Tree Items...</button>
    <hr>
    <button class="expand" aria-label="Show more"><svg viewBox="0 0 12 16"><path d="M2 2 6 6 10 2M2 9 6 13 10 9" fill="none" stroke="#111" stroke-width="2"/></svg></button>
  </div>
</div>
</body>
</html>
```
FILE: styles.css
```css
* { box-sizing: border-box; }
body {
  margin: 0;
  background: #cc0099;
  color: #3c3e58;
  font: 15px/19px "Noto Sans", "Open Sans", sans-serif;
}
.sprite { position: absolute; width: 0; height: 0; }
button {
  margin: 0;
  padding: 0;
  border: 0;
  background: none;
  color: inherit;
  font: inherit;
  white-space: nowrap;
}
input { border: 0; padding: 0; background: none; font: inherit; color: inherit; min-width: 0; outline: 0; }
ul, h1, h2 { margin: 0; padding: 0; font: inherit; }
.icon { display: block; width: 24px; height: 24px; flex: none; }
.narrow { width: 16px; }
.caret {
  width: 0;
  height: 0;
  flex: none;
  border: 5px solid transparent;
  border-top-color: #3f414e;
  border-bottom: 0;
}
.tri { width: 0; height: 0; border: 5px solid transparent; }
.tri.left { border-right: 6px solid #444; border-left: 0; }
.tri.right { border-left: 6px solid #444; border-right: 0; }

.app {
  position: relative;
  display: flex;
  flex-direction: column;
  min-height: 100vh;
  padding: 3px 8px 10px 9px;
}

/* Title bar */
.titlebar {
  display: flex;
  align-items: stretch;
  height: 42px;
  background: linear-gradient(#ecebf7, #d4d4e3 55%, #bcbdcd);
  border-bottom: 2px solid #6a6d78;
}
.brand {
  display: flex;
  align-items: center;
  gap: 4px;
  width: 181px;
  padding-left: 4px;
  background: linear-gradient(#d9d9e4, #b5b6c4);
  color: #30313a;
  font: 24px/26px "DejaVu Sans Condensed", sans-serif;
}
.brand-mark { width: 30px; height: 32px; flex: none; }
.menubar {
  display: flex;
  align-items: center;
  gap: 23px;
  width: 460px;
  padding-left: 13px;
  border-left: 12px solid #787a9c;
  border-right: 3px solid #696c79;
  background: linear-gradient(#dcdcea, #b4b5c5);
}
.pin { width: 20px; height: 22px; }
.quick { display: flex; align-items: center; padding-left: 8px; }
.split { display: flex; align-items: center; gap: 9px; width: 52px; }
.faded .caret { opacity: 0.4; }
.select-tool {
  display: flex;
  align-items: center;
  justify-content: space-between;
  width: 51px;
  height: 32px;
  padding-left: 1px;
  border: 2px solid #686b80;
  border-radius: 6px;
  background: #b9b9cd;
}
.drop {
  display: flex;
  align-items: center;
  justify-content: center;
  width: 18px;
  height: 28px;
  border-left: 1px solid #686b80;
  background: #dfdfec;
}
.rebuild { width: 36px; padding-left: 8px; }
.doc-title { margin: auto; padding-right: 6px; color: #33343f; }
.search {
  display: flex;
  align-items: center;
  align-self: center;
  width: 287px;
  height: 28px;
  border: 2px solid #868996;
  border-radius: 14px;
  background: linear-gradient(#cfd0dc, #fff);
  color: #26262e;
}
.lens { width: 32px; height: 32px; flex: none; margin-right: -6px; }
.search input { flex: 1; margin-left: 4px; }
.window-controls { display: flex; align-items: center; gap: 14px; padding: 0 9px 0 12px; }
.help { color: #777b88; font-size: 22px; font-weight: bold; }
.ctl { display: block; width: 20px; height: 20px; }

/* Ribbon */
.ribbon {
  display: flex;
  height: 107px;
  background: linear-gradient(#fff, #f3f5fd 30%, #e7e9f3 65%, #d3d4de);
  border-bottom: 2px solid #666976;
}
.group { display: flex; border-right: 2px solid #dcdde8; }
.boss { width: 375px; padding-left: 7px; }
.cut { width: 369px; padding-left: 5px; }
.detail { width: 298px; }
.reference { width: 160px; padding-left: 6px; }
.big {
  position: relative;
  display: flex;
  flex-direction: column;
  align-items: center;
  width: 76px;
  padding-top: 9px;
  text-align: center;
}
.low { padding-top: 20px; }
.boss .big { width: 86px; }
.cut .big { width: 71px; }
.detail .big { width: 55px; }
.big .caret { position: absolute; bottom: 10px; }
.stack {
  display: grid;
  grid-template-rows: repeat(3, 34px);
  margin-left: 4px;
  padding-top: 1px;
}
.cut .stack { margin-left: 7px; }
.stack button { display: flex; align-items: center; gap: 8px; }
.detail .stack { width: 79px; margin-left: 8px; }
.ribbon .instant {
  width: 84px;
  height: 99px;
  margin: 3px 0 0;
  padding-top: 14px;
  border: 2px solid #7f809c;
  border-radius: 7px;
  background: #b9b9d7;
}
.ds { width: 104px; height: 96px; margin: 4px 10px 0 auto; }

/* Workspace */
.workspace {
  flex: 1;
  display: grid;
  grid-template: 32px 1fr / 286px 1fr;
  background: linear-gradient(#c5c7d3, #c7c9d4 60%, #c6c8d2);
}
.strip { grid-column: 1 / -1; display: flex; align-items: flex-start; }
.tabs { display: flex; font: 17px/24px "Liberation Sans", Arial, sans-serif; color: #5b5e6c; }
.tabs button {
  height: 27px;
  padding: 0 13px 2px;
  border: solid #62656f;
  border-width: 0 2px 2px 0;
  background: #c0c1cc;
}
.tabs .active { height: 30px; padding: 0 11px 4px; background: #eef0f5; color: #2f3039; font-weight: bold; }
.headsup { display: flex; gap: 9px; padding: 8px 0 0; margin-left: 445px; }
.headsup button { display: flex; align-items: center; gap: 4px; }
.headsup .caret { border-width: 4px; border-bottom: 0; }
.doc-controls { display: flex; gap: 14px; margin-left: auto; padding: 12px 15px 0 0; }

/* Feature manager */
.manager {
  display: flex;
  flex-direction: column;
  min-width: 0;
  padding-top: 2px;
  border-top: 1px solid #858896;
  border-right: 3px solid #70737f;
  background: #e4e5ee;
  color: #26272e;
}
.manager-tabs {
  display: flex;
  gap: 2px;
  height: 37px;
  padding: 5px 0 0 1px;
  background: #cfcfe2;
  border-top: 1px solid #858896;
  border-bottom: 1px solid #858896;
}
.manager-tabs button {
  display: flex;
  align-items: center;
  justify-content: center;
  width: 38px;
  height: 30px;
  border: 1px solid #858896;
  border-width: 1px 2px 0 1px;
  border-radius: 5px 5px 0 0;
  background: #b6b8c8;
}
.manager-tabs .active { height: 31px; background: #e4e5ee; border-color: #e4e5ee; }
.manager-tabs .more {
  justify-content: flex-end;
  height: 26px;
  margin: 0 8px 0 auto;
  border: 0;
  background: none;
  color: #55586a;
  font-size: 26px;
}
.filter {
  display: flex;
  align-items: center;
  height: 25px;
  margin: 3px 2px 4px 1px;
  padding-left: 9px;
  border: 2px solid #8e92a2;
  border-radius: 13px;
  background: linear-gradient(#d6d7e2, #fff);
}
.filter svg { width: 18px; height: 18px; }
.filter input { flex: 1; }
.tree {
  overflow: hidden;
  border-bottom: 3px solid #4672bd;
  font-size: 16px;
  line-height: 26px;
  list-style: none;
}
.tree li { display: flex; align-items: center; height: 26px; white-space: pre; }
.tree .icon { width: 23px; height: 23px; margin-right: 8px; }
.root .icon { margin-left: 3px; }
.branch, .pass { position: relative; width: 30px; height: 26px; flex: none; }
.branch::before, .pass::before {
  content: "";
  position: absolute;
  left: 15px;
  top: 0;
  bottom: 0;
  border-left: 1px dotted #85878f;
}
.branch::after {
  content: "";
  position: absolute;
  left: 15px;
  right: 0;
  top: 13px;
  border-top: 1px dotted #85878f;
}
.sub { width: 28px; }
.sub::before, .sub::after { left: 12px; }
.last::before { bottom: 13px; }
.none::before { display: none; }
.box {
  position: absolute;
  z-index: 1;
  left: 9px;
  top: 7px;
  width: 13px;
  height: 13px;
  border: 1px solid #8d9098;
  background: #f5f5f8;
  font: 14px/10px "Liberation Sans", sans-serif;
  text-align: center;
}
.selected { height: 20px; line-height: 20px; background: #3595ea; color: #e9f4ff; }
.scrollbar {
  display: flex;
  align-items: center;
  height: 23px;
  margin: auto 2px 5px 0;
  padding: 0 6px 0 7px;
  border-top: 1px solid #d6d6dc;
  background: #f0f0f4;
}
.thumb {
  display: flex;
  align-items: center;
  justify-content: center;
  gap: 2px;
  width: 103px;
  height: 21px;
  margin: 0 auto 0 12px;
  border: 1px solid #92949c;
  background: linear-gradient(#f6f6f8, #d5d6dc);
}
.thumb i { width: 2px; height: 9px; background: #666; }

/* Graphics area */
.viewport { position: relative; min-width: 0; }
.drawing { display: block; width: 100%; height: 100%; }
.plane-line { fill: none; stroke: #3b2fe0; stroke-width: 2; }
.plane-label { fill: #2b20e4; stroke: #2b20e4; stroke-width: 1; font: 29px "DejaVu Sans", sans-serif; }
.sketch-lines { fill: none; stroke: #4aa0f0; stroke-width: 3; }
.dots { stroke-dasharray: 5 5; }
.sketch-lines .dashes { stroke-width: 2; stroke-dasharray: 26 8 5 8; opacity: 0.8; }
.triad { font: 18px "Noto Sans", sans-serif; }
.taskpane {
  position: absolute;
  right: 0;
  top: 56px;
  display: flex;
  flex-direction: column;
  gap: 2px;
}
.taskpane button {
  display: flex;
  align-items: center;
  justify-content: center;
  width: 34px;
  height: 33px;
  border: 2px solid #848796;
  border-right: 0;
  border-radius: 6px 0 0 6px;
  background: #b9bbc9;
}
.taskpane .active { background: #eeeff6; }

/* Sheet tabs and status bar */
.sheets {
  display: flex;
  height: 22px;
  border-top: 2px solid #33343c;
  background: #e3e3ee;
  border-bottom: 1px solid #7b7e8a;
  font: 17px/18px "Liberation Sans", Arial, sans-serif;
  color: #3a3c48;
}
.sheet-nav { display: flex; width: 99px; padding-left: 3px; gap: 1px; background: #c9cad6; }
.sheet-nav button {
  display: flex;
  align-items: center;
  justify-content: center;
  width: 22px;
  background: #a6a8b8;
}
.sheet-nav .tri.left { border-right-color: #858899; }
.sheet-nav .tri.right { border-left-color: #858899; }
.bar { width: 2px; height: 10px; background: #858899; }
.sheet { padding: 0 21px 0 12px; border: solid #5c5f6c; border-width: 0 2px 2px; background: #bfc0cd; }
.sheets .active { padding: 0 14px; background: #e3e5ee; border-right: 0; color: #2b2c34; font-weight: bold; }
.status {
  display: flex;
  align-items: center;
  height: 31px;
  padding: 0 20px 0 3px;
  background: linear-gradient(#d8d9e5, #b9bcca);
  border-bottom: 2px solid #6c6f7c;
  color: #24252c;
  font-size: 16px;
}
.mode { margin-left: auto; padding: 0 8px; border: solid #e0e1ea; border-width: 0 1px; }
.cells { width: 14px; height: 18px; margin: 0 107px 0 10px; border: solid #e0e1ea; border-width: 0 1px; }

/* Context popups */
.popup {
  position: absolute;
  left: 118px;
  width: 283px;
  border: 2px solid #3b3d4a;
  background: #f2f2f8;
  box-shadow: 4px 4px 4px rgba(50, 50, 70, 0.5);
  color: #24252c;
}
.context-bar {
  top: 561px;
  display: grid;
  grid-template-columns: repeat(4, 34px);
  grid-auto-rows: 33px;
  align-content: start;
  height: 87px;
  padding: 4px 3px;
}
.context-bar button { display: flex; align-items: center; justify-content: center; width: 32px; height: 32px; }
.context-bar .hover { border: 2px solid #b4b6be; border-radius: 6px; background: #f8f8fb; }
.tooltip {
  position: absolute;
  left: 131px;
  top: 628px;
  padding: 2px 8px;
  border: 1px solid #8b8d96;
  border-radius: 4px;
  background: #f7f7fb;
  box-shadow: 3px 3px 3px rgba(50, 50, 70, 0.5);
  color: #62636c;
  font-size: 17px;
  line-height: 22px;
}
.context-menu {
  top: 663px;
  padding-top: 6px;
  background: linear-gradient(90deg, #e3e4ea 42px, #b9bac4 42px, #b9bac4 43px, #f2f2f8 43px);
  font-size: 16px;
  line-height: 22px;
}
.context-menu h2 {
  height: 23px;
  margin-bottom: 3px;
  padding-left: 3px;
  border-bottom: 1px solid #8f919d;
  background: linear-gradient(#d2d3dc, #a3a5b2);
  font: bold 16px/22px "Noto Sans", sans-serif;
}
.context-menu button { display: flex; align-items: center; width: 100%; height: 29px; }
.context-menu button span { width: 50px; padding-left: 9px; }
.context-menu u { text-underline-offset: 3px; }
.context-menu .tri { margin: 0 11px 0 auto; border-left-color: #111; }
.context-menu hr { height: 1px; margin: 8px 0 6px 44px; border: 0; background: #84868f; }
.context-menu .expand { justify-content: center; height: 35px; }
.expand svg { width: 12px; height: 16px; }
```
